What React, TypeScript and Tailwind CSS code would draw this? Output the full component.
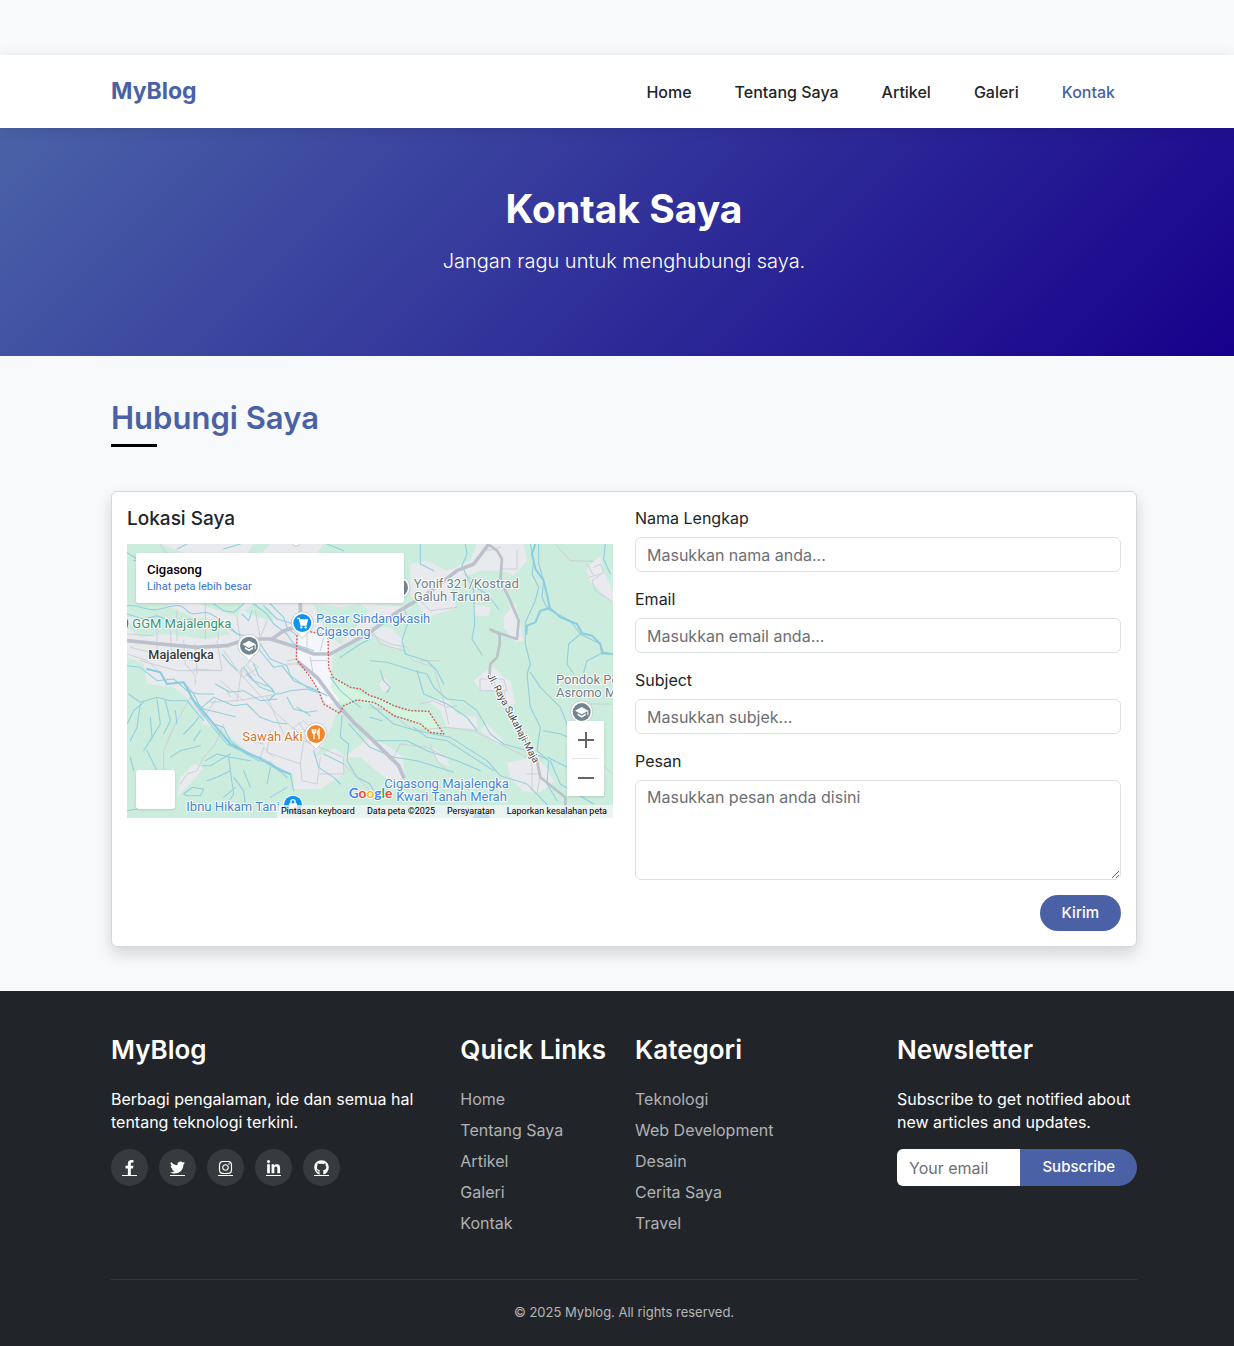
import React from "react";
import { FaFacebookF, FaTwitter, FaInstagram, FaLinkedinIn, FaGithub } from "react-icons/fa";

const navLinks = ["Home", "Tentang Saya", "Artikel", "Galeri", "Kontak"];
const categories = ["Teknologi", "Web Development", "Desain", "Cerita Saya", "Travel"];
const socials = [
  { label: "Facebook", Icon: FaFacebookF },
  { label: "Twitter", Icon: FaTwitter },
  { label: "Instagram", Icon: FaInstagram },
  { label: "LinkedIn", Icon: FaLinkedinIn },
  { label: "GitHub", Icon: FaGithub },
];

const water = [
  "M0 185 C40 180 60 205 100 195 S160 175 180 200 S230 190 260 215 L300 240 L330 270 L400 285",
  "M0 210 L50 225 L90 215 L140 235 L190 225 L250 255 L300 250 L340 275",
  "M260 180 L290 200 L320 205 L350 180 M345 210 L365 230 L375 200",
  "M380 180 L420 210 L440 240 L480 270 L500 300 L560 320",
  "M410 185 L450 225 L500 240",
  "M430 180 L470 220 L480 250 L510 275",
  "M400 300 L430 345 L480 365 L490 395 L540 430 L590 450",
  "M395 315 L440 370 L465 365 L500 410 L560 435 L600 455",
  "M350 370 L380 410 L430 430 L445 450 L425 470",
  "M360 390 L400 430 L440 445 M380 360 L395 395 L440 440",
  "M455 450 L490 440 L540 435 L570 445 M480 460 L500 495 L540 505 L570 500 M510 490 L550 515",
  "M265 420 L310 445 L350 440 L400 470 L450 465",
  "M225 490 L260 460 L320 485 L360 480 L400 520 L440 535 L480 540",
  "M200 470 L230 495 L270 505 L325 518",
  "M285 330 L305 355 L330 380",
  "M60 375 L100 385 L120 420 L170 415 L200 450 L215 480 L260 540 L290 550 L310 590 L360 630 L400 640 L450 670 L490 690 L500 740",
  "M0 365 L40 370 L90 410 L140 405 L180 440 L215 450 L260 450",
  "M190 460 L220 500 L250 540 L300 600 L350 625 L395 650 L430 655 L480 700",
  "M5 450 L40 475 L90 460 L130 470 L180 470 L230 530",
  "M0 540 L20 500 L50 475 M40 480 L30 550 L10 590 M90 465 L100 540 L70 590 M115 470 L130 530 L110 570",
  "M70 520 L75 580 L50 620 M170 570 L200 540 L215 520 M145 500 L150 540 M200 590 L220 560",
  "M130 640 L160 620 L220 605 M235 650 L270 630 L310 640 L370 650 M310 630 L250 665 L225 665",
  "M305 640 L310 680 L320 750 L305 775 M310 680 L270 700 L240 710 M320 700 L350 740 L355 780 M325 730 L290 760",
  "M350 680 L370 730 M430 670 L420 720 M170 750 L195 730 L230 735 L220 755 L180 755 Z",
  "M10 640 L20 680 M60 620 L90 680 M0 800 L60 790 M400 800 L450 800 M480 730 L430 760",
  "M560 620 L575 670 L620 700 L640 720 M590 630 L650 660",
  "M645 515 L640 580 L665 600 L660 650 L690 700 L729 720 L750 760",
  "M610 400 L640 440 L700 490 M640 340 L700 300 L729 285",
  "M20 50 L60 40 L110 60 M150 15 L180 0 M290 15 L340 0 M600 0 L650 20 M0 25 L30 45",
  "M665 540 L729 610 L800 640 L870 650 L980 685",
  "M880 0 L880 60 L920 80 M1015 0 L1020 30 L1005 65 L1040 140 L1043 240 L1035 285 L1065 333",
  "M1045 130 L1080 150 L1115 195",
  "M1210 0 L1220 50 L1215 90 L1235 130 L1225 170 L1195 235 L1195 300 L1210 360 L1200 390 L1210 490 L1240 550 L1230 620 L1265 650 L1260 720 L1290 770",
  "M1235 0 L1235 60 L1250 110 L1245 160 L1262 195",
  "M1435 0 L1430 45 L1450 90",
  "M830 190 L845 230 L825 290 L835 330 L900 350 L930 380 L950 420",
  "M729 350 L780 355 L860 380 L900 390 L920 430 L960 465 L1010 470 L1050 500 L1090 570 L1130 600 L1200 620 L1260 645",
  "M870 380 L890 450 L960 480 L1020 520 L1050 560",
  "M760 380 L770 410 L790 430 L780 445",
  "M729 480 L800 540 L870 560 L970 580 L1080 650 L1120 695 L1200 720 L1260 782",
  "M740 590 L840 590 L900 620 L990 650 L1060 680",
  "M729 520 L765 530 M860 550 L900 580 L960 590 L1100 680",
  "M1262 195 L1330 230 L1360 270 L1420 300 L1430 325 L1458 330",
  "M1360 270 L1325 300 L1320 360 L1340 390 M1430 325 L1380 350 L1370 385",
  "M1210 385 L1240 430 L1300 490 L1320 540",
  "M1250 560 L1300 570 L1350 590 M1262 640 L1320 670 L1350 690 M1270 650 L1300 720 L1400 780",
];

const wideWater = [
  "M1225 0 L1215 30 L1225 75 L1250 110 L1262 160 L1268 192 L1240 200 L1225 235 L1200 245 L1198 270",
  "M1268 192 L1300 220 L1350 240 L1365 268 L1395 275 L1420 300 L1425 328 L1458 330",
  "M60 375 L100 385 L120 420 L170 415 L200 470 L260 540 L310 600 L400 645 L460 680 L490 690",
];

const lanes = [
  "M100 0 L115 25 M120 20 L110 60 M235 180 L235 285 M90 250 L90 330 L200 350 M130 250 L135 340",
  "M10 310 L90 330 M170 290 L175 360 L205 395 L205 420 M205 300 L210 390 M270 290 L285 380 L200 375",
  "M0 330 L60 350 L100 385 M0 270 L80 275 M150 200 L150 290 M40 350 L150 380 L280 380",
  "M385 200 L400 285 M330 220 L340 290 M270 240 L275 285 M420 230 L400 280",
  "M290 320 L340 390 L450 510 L540 590 M345 370 L330 470 M280 410 L350 470",
  "M250 475 L330 470 L455 450 M300 440 L310 460 M265 470 L230 520 L200 480",
  "M340 380 L370 350 L395 370 L350 400 Z M360 365 L385 395 M345 375 L375 410",
  "M480 350 L510 345 L515 360 L480 360 M420 460 L470 570 M455 445 L430 460",
  "M290 540 L265 600 L230 640 L210 680 L180 690 L160 720 M190 460 L140 550 L110 620 L110 680",
  "M430 560 L420 625 L520 660 L530 590 M520 660 L525 710 L570 720 L580 640",
  "M530 590 L650 640 L650 690 L580 690 M500 550 L530 530 L550 550 L520 570 Z M515 535 L540 570",
  "M410 600 L370 590 M400 640 L410 610 L440 640 M650 660 L729 740",
  "M540 270 L540 320 M550 340 L560 400 M590 280 L580 320 M550 350 L600 350",
  "M729 250 L760 300 L830 320 L860 350 L920 370 L950 470 L965 540 M940 350 L880 350",
  "M729 270 L790 300 L840 310 M880 480 L920 470 L960 490 L990 485",
  "M729 490 L780 500 L860 560 L960 550 L1040 560 L1120 600 L1200 640",
  "M800 640 L820 600 L900 610 L960 640 M910 600 L930 650 L970 690",
  "M880 170 L910 200 L990 190 M1010 90 L1040 110 L1060 130 M1080 20 L1120 10 M1120 75 L1170 75 L1170 20",
  "M1060 405 L1130 405 L1140 440 L1060 440 Z M1100 400 L1110 450 M1130 440 L1140 480",
  "M1285 0 L1330 50 L1400 52 M1400 70 L1420 60 L1430 85 L1395 110 L1405 140 L1458 175",
  "M1380 60 L1400 95 M1385 100 L1420 90 M1410 650 L1458 690 M1350 480 L1458 480 M1215 650 L1215 740 M1200 690 L1240 690 L1230 750",
];

const roads = [
  "M0 290 L100 300 L210 310 L300 305 L360 285 L430 285 L510 310 L560 330 L610 330 L729 265 L810 205 L900 150 L990 80 L1040 60 L1082 5",
  "M435 285 L470 260 L520 245 L520 180",
  "M515 355 L570 400 L630 480 L680 535 L729 580 L790 640 L815 665 L830 700",
];

const minorRoads = [
  "M1082 0 L1110 20 L1125 45 L1120 110 L1150 170 L1175 230 L1170 285 L1100 262 L1090 256 L1118 270 L1118 300 L1110 340 L1090 360 L1087 400",
  "M1230 650 L1240 700 L1290 740 L1315 760 L1315 822",
];

function Pin({ x, y, color, children }: { x: number; y: number; color: string; children?: React.ReactNode }) {
  return (
    <g transform={`translate(${x} ${y})`}>
      <path d="M0 46 L-15 29 A33 33 0 1 1 15 29 Z" fill="#fff" stroke="#b4bbc1" strokeWidth="2" />
      <circle r="27" fill={color} />
      {children}
    </g>
  );
}

function Cap() {
  return (
    <g fill="#fff">
      <path d="M-20 -4 L0 -15 L20 -4 L0 7 Z" />
      <path d="M-12 4 L0 11 L12 4 V10 L0 17 L-12 10 Z" />
      <path d="M17 -4 H20 V10 H17 Z" />
    </g>
  );
}

function MapDrawing() {
  return (
    <svg viewBox="0 0 1458 822" preserveAspectRatio="xMidYMid slice" className="block h-full w-full" role="img" aria-label="Peta Cigasong">
      <rect width="1458" height="822" fill="#ccecdd" />
      <g fill="#e8eaed">
        <path d="M100 0 L380 0 L360 30 L180 30 Z M430 0 L590 0 L570 30 L400 30 Z" />
        <path d="M0 220 L60 215 L130 180 L210 178 L280 200 L330 220 L350 180 L729 180 L860 190 L729 250 L620 330 L612 400 L640 450 L628 510 L600 590 L655 640 L650 690 L580 735 L500 735 L500 690 L440 670 L380 640 L290 560 L230 540 L190 470 L140 430 L60 420 L50 360 L0 340 Z" />
        <path d="M160 700 L200 660 L230 670 L190 720 L150 760 Z M650 640 L729 580 L790 610 L830 640 L830 700 L800 720 L760 690 L700 640 Z" />
        <path d="M850 60 L900 50 L960 80 L1030 50 L1050 0 L1190 0 L1200 50 L1160 95 L1120 80 L1060 80 L960 120 L990 190 L900 220 L850 150 Z" />
        <path d="M1130 220 L1165 175 L1180 240 L1190 290 L1165 295 L1130 250 Z M1040 410 L1095 365 L1130 400 L1150 410 L1165 480 L1130 485 L1100 440 L1060 440 Z" />
        <path d="M1140 655 L1220 640 L1260 670 L1280 715 L1240 745 L1190 745 L1150 700 Z M1380 70 L1420 35 L1430 85 L1458 140 L1458 180 L1410 130 L1385 110 Z" />
        <path d="M729 250 L790 250 L830 290 L810 320 L760 290 Z M900 470 L960 465 L990 510 L1050 520 L1050 555 L960 550 L940 500 Z M1060 560 L1080 540 L1130 590 L1110 600 Z M910 605 L960 640 L970 670 L930 650 Z M755 420 L775 400 L795 430 L770 445 Z M1040 180 L1090 190 L1085 215 L1045 215 Z" />
      </g>
      <g fill="#ccecdd">
        <path d="M0 250 L60 210 L130 190 L200 220 L280 230 L310 270 L240 285 L120 270 L40 280 Z" />
        <path d="M560 180 L640 190 L700 180 L729 200 L640 300 L600 270 Z M350 200 L380 180 L430 195 L440 230 L390 220 Z" />
        <path d="M560 640 L590 600 L630 510 L665 540 L660 590 L600 625 Z" />
      </g>
      <path d="M515 275 L560 265 L605 275 L612 400 L640 470 L600 480 L510 350 Z" fill="#f5f6f9" />
      <path d="M618 400 L700 450 L729 455 L830 500 L905 502 L950 570 L910 565 L850 530 L760 490 L680 468 L645 480 L610 430 Z" fill="#d3f5df" />
      <g fill="none" strokeLinejoin="round" strokeLinecap="round">
        <g stroke="#cdd0d9" strokeWidth="3">{lanes.map((d) => <path key={d} d={d} />)}</g>
        <g stroke="#91cfdf" strokeWidth="3.2">{water.map((d) => <path key={d} d={d} />)}</g>
        <g stroke="#8bcde0" strokeWidth="6">{wideWater.map((d) => <path key={d} d={d} />)}</g>
        <g stroke="#bcc2cd" strokeWidth="11">{roads.map((d) => <path key={d} d={d} />)}</g>
        <g stroke="#bcc2c9" strokeWidth="8">{minorRoads.map((d) => <path key={d} d={d} />)}</g>
        <path d="M510 275 L508 345 L550 400 L575 440 L590 480 L638 508 L650 485 L690 468 L740 475 L760 486 L800 515 L850 530 L880 540 L910 565 L950 570 L905 502 L850 500 L800 485 L760 465 L729 455 L700 435 L670 430 L618 400 L605 370 L603 275 L545 262" stroke="#c8605c" strokeWidth="4.5" strokeDasharray="2 8" />
      </g>
      <circle cx="508" cy="-8" r="14" fill="#fff" stroke="#aab0b8" strokeWidth="2" />
      <Pin x={366} y={305} color="#72848f"><Cap /></Pin>
      <Pin x={526} y={237} color="#0f94ee">
        <path d="M-16 -14 H-9 L-4 6 H11 L15 -9 H-7" fill="#fff" stroke="#fff" strokeWidth="4" />
        <circle cx="-3" cy="13" r="3.5" fill="#fff" />
        <circle cx="10" cy="13" r="3.5" fill="#fff" />
      </Pin>
      <Pin x={567} y={570} color="#f4862a">
        <path d="M-11 -15 V-5 Q-6 2 -1 -5 V-15 M-6 -15 V16 M9 16 V-14 Q3 -8 5 2 H9" fill="none" stroke="#fff" strokeWidth="4" />
      </Pin>
      <Pin x={1364} y={504} color="#72848f"><Cap /></Pin>
      <Pin x={816} y={131} color="#72848f" />
      <g transform="translate(498 782)">
        <circle r="30" fill="#fff" />
        <circle r="27" fill="#0f94ee" />
        <path d="M-12 -4 H12 V14 H-12 Z" fill="#fff" />
        <path d="M-6 -3 V-9 A6 6 0 0 1 6 -9 V-3" fill="none" stroke="#fff" strokeWidth="4" />
      </g>
      <circle cx="1063" cy="830" r="27" fill="#0f94ee" />
      <circle cx="-23" cy="238" r="27" fill="#2f8f65" />
      <g className="font-['Roboto',sans-serif]" fontSize="39" stroke="#fff" strokeWidth="6" strokeLinejoin="round" paintOrder="stroke">
        <text x="16" y="252" fill="#3b9372">GGM Majalengka</text>
        <text x="64" y="345" fill="#33373b" fontSize="38" fontWeight="500">Majalengka</text>
        <g fill="#4285d6">
          <text x="567" y="238">Pasar Sindangkasih</text>
          <text x="567" y="276">Cigasong</text>
          <text x="178" y="802">Ibnu Hikam Tani</text>
          <text x="772" y="733">Cigasong Majalengka</text>
          <text x="808" y="772">Kwari Tanah Merah</text>
        </g>
        <text x="346" y="590" fill="#d7722f">Sawah Aki</text>
        <g fill="#6e7f8a">
          <text x="860" y="132">Yonif 321/Kostrad</text>
          <text x="860" y="171">Galuh Taruna</text>
          <text x="1287" y="419">Pondok Pe</text>
          <text x="1287" y="458">Asromo M</text>
        </g>
        <text transform="translate(1080 395) rotate(62)" fill="#44494e" fontSize="30">Jl. Raya Sukahaji-Maja</text>
      </g>
      <text x="665" y="763" className="font-['Lato',sans-serif]" fontSize="41" fontWeight="700" stroke="#fff" strokeWidth="5" paintOrder="stroke">
        <tspan fill="#4285f4">G</tspan><tspan fill="#ea4335">o</tspan><tspan fill="#fbbc04">o</tspan><tspan fill="#4285f4">g</tspan><tspan fill="#34a853">l</tspan><tspan fill="#ea4335">e</tspan>
      </text>
    </svg>
  );
}

function LocationMap() {
  return (
    <div className="relative h-[274px] overflow-hidden font-['Roboto',sans-serif]">
      <MapDrawing />
      <div className="absolute top-[9px] left-[9px] w-[268px] rounded-[2px] bg-white px-[11px] pt-2 pb-[7px] shadow">
        <div className="text-[13px] leading-[17px] font-medium text-black">Cigasong</div>
        <a href="#peta" className="block text-[11px] leading-[18px] text-[#3474d4]">Lihat peta lebih besar</a>
      </div>
      <button type="button" aria-label="Tampilkan citra satelit" className="absolute bottom-[9px] left-[9px] size-[39px] rounded-[3px] bg-white shadow" />
      <div className="absolute right-[9px] bottom-[22px] flex w-[37px] flex-col bg-white shadow">
        <button type="button" aria-label="Perbesar" className="flex h-[37px] items-center justify-center text-[#666]">
          <svg viewBox="0 0 16 16" className="size-4"><path d="M8 0V16M0 8H16" stroke="currentColor" strokeWidth="2" /></svg>
        </button>
        <div className="mx-[5px] h-px bg-[#e6e6e6]" />
        <button type="button" aria-label="Perkecil" className="flex h-[37px] items-center justify-center text-[#666]">
          <svg viewBox="0 0 16 16" className="size-4"><path d="M0 8H16" stroke="currentColor" strokeWidth="2" /></svg>
        </button>
      </div>
      <div className="absolute right-0 bottom-0 flex h-[13px] items-center gap-3 bg-[#f5f5f5]/75 pr-[6px] pl-1 text-[9px] leading-[13px] text-black">
        <button type="button">Pintasan keyboard</button>
        <span>Data peta ©2025</span>
        <a href="#persyaratan">Persyaratan</a>
        <a href="#laporkan">Laporkan kesalahan peta</a>
      </div>
    </div>
  );
}

const inputClass =
  "block w-full rounded-[6px] border border-[#dee2e6] bg-white px-[11px] leading-[22px] text-[#212529] placeholder:text-[#6c7075] placeholder:opacity-100";

function Field({ id, label, placeholder, type = "text" }: { id: string; label: string; placeholder: string; type?: string }) {
  return (
    <div className="mb-4">
      <label htmlFor={id} className="mb-[7px] block leading-[23px]">{label}</label>
      <input id={id} type={type} placeholder={placeholder} className={`${inputClass} h-[35px]`} />
    </div>
  );
}

function FooterLinks({ title, items }: { title: string; items: string[] }) {
  return (
    <>
      <h2 className="mb-[22px] text-[26px] leading-8 font-semibold whitespace-nowrap">{title}</h2>
      <ul className="space-y-2 leading-[23px] text-[#b0b2b4]">
        {items.map((item) => (
          <li key={item}><a href="#">{item}</a></li>
        ))}
      </ul>
    </>
  );
}

export default function App() {
  return (
    <div className="min-h-screen bg-[#f8f9fb] pt-[55px] font-['Inter',sans-serif] text-base text-[#212529]">
      <header className="relative bg-white pr-[97px] pl-[111px] shadow-[0_2px_14px_rgba(0,0,0,0.1)]">
        <div className="flex h-[73px] items-center justify-between">
          <a href="#" className="text-[23px] font-bold text-[#4a62a5]">MyBlog</a>
          <nav className="flex gap-[43px] pr-[22px] font-medium">
            {navLinks.map((item) => (
              <a key={item} href="#" className={item === "Kontak" ? "text-[#4a62a5]" : "text-[#212529]"}>{item}</a>
            ))}
          </nav>
        </div>
      </header>

      <section className="bg-[linear-gradient(135deg,#4a62a7_0%,#17008c_100%)] pt-[58px] pr-[97px] pb-20 pl-[111px] text-center text-white">
        <h1 className="text-[39px] leading-[46px] font-bold">Kontak Saya</h1>
        <p className="mt-[15px] text-[20px] leading-[29px] font-light">Jangan ragu untuk menghubungi saya.</p>
      </section>

      <main className="pt-11 pr-[97px] pb-11 pl-[111px]">
        <h2 className="text-[31px] leading-9 font-semibold text-[#4a62a5]">Hubungi Saya</h2>
        <div className="mt-2 h-[3px] w-[46px] bg-black" />
        <div className="mt-11 grid grid-cols-2 gap-[22px] rounded-[6px] border border-[#d5d8dc] bg-white p-[15px] shadow-[0_7px_15px_rgba(0,0,0,0.15)]">
          <div>
            <h3 className="mb-[13px] text-[19px] leading-6 font-medium">Lokasi Saya</h3>
            <LocationMap />
          </div>
          <form onSubmit={(e) => e.preventDefault()}>
            <Field id="nama" label="Nama Lengkap" placeholder="Masukkan nama anda..." />
            <Field id="email" label="Email" placeholder="Masukkan email anda..." type="email" />
            <Field id="subjek" label="Subject" placeholder="Masukkan subjek..." />
            <label htmlFor="pesan" className="mb-[7px] block leading-[23px]">Pesan</label>
            <textarea id="pesan" placeholder="Masukkan pesan anda disini" className={`${inputClass} h-[100px] resize py-[5px]`} />
            <div className="mt-[15px] flex justify-end">
              <button type="submit" className="h-9 rounded-full bg-[#4a62a5] px-[22px] text-[15px] font-medium text-white">Kirim</button>
            </div>
          </form>
        </div>
      </main>

      <footer className="bg-[#212529] pt-[43px] pr-[97px] pb-6 pl-[111px] text-white">
        <div className="grid grid-cols-12 gap-x-[22px]">
          <div className="col-span-4">
            <h2 className="mb-[22px] text-[26px] leading-8 font-semibold">MyBlog</h2>
            <p className="leading-[23px]">Berbagi pengalaman, ide dan semua hal tentang teknologi terkini.</p>
            <div className="mt-[15px] flex gap-[11px]">
              {socials.map(({ label, Icon }) => (
                <a key={label} href="#" aria-label={label} className="flex size-[37px] items-center justify-center rounded-full bg-[#373b3e]">
                  <span className="border-b border-white"><Icon className="size-[15px]" /></span>
                </a>
              ))}
            </div>
          </div>
          <div className="col-span-2"><FooterLinks title="Quick Links" items={navLinks} /></div>
          <div className="col-span-3"><FooterLinks title="Kategori" items={categories} /></div>
          <div className="col-span-3">
            <h2 className="mb-[22px] text-[26px] leading-8 font-semibold">Newsletter</h2>
            <p className="leading-[23px]">Subscribe to get notified about new articles and updates.</p>
            <form className="mt-[15px] flex h-[37px]" onSubmit={(e) => e.preventDefault()}>
              <input type="email" aria-label="Your email" placeholder="Your email" className="min-w-0 flex-1 rounded-l-[6px] bg-white px-3 text-[#212529] placeholder:text-[#6c7075] placeholder:opacity-100" />
              <button type="submit" className="rounded-r-full bg-[#4a62a5] px-[22px] text-[15px] font-medium">Subscribe</button>
            </form>
          </div>
        </div>
        <div className="mt-11 border-t border-[#35393d] pt-[22px] text-center text-[13px] leading-5 text-[#b5b7b9]">© 2025 Myblog. All rights reserved.</div>
      </footer>
    </div>
  );
}
